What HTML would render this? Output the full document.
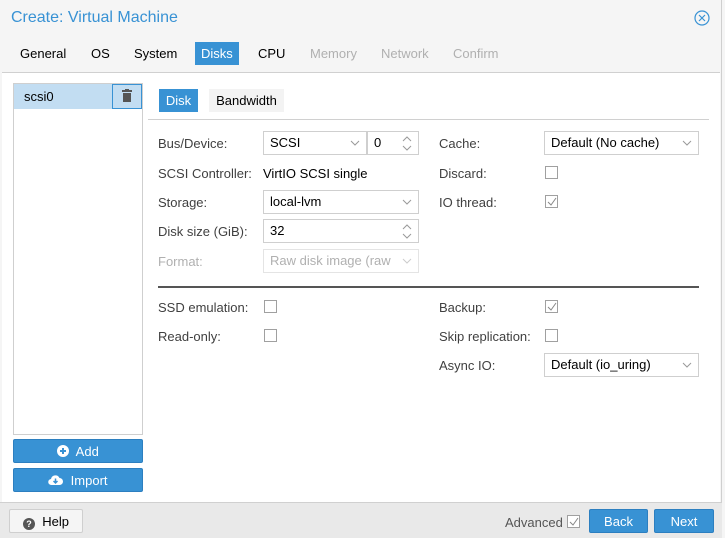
<!DOCTYPE html>
<html><head><style>
*{box-sizing:border-box;margin:0;padding:0}
body{width:725px;height:538px;overflow:hidden;background:#f5f5f5;font-family:"Liberation Sans",sans-serif;font-size:13px;color:#000;position:relative}
.a{position:absolute}
.win{left:0;top:0;width:722px;height:538px;background:#f5f5f5;border-right:1px solid #cfcfcf}
.title{left:11px;top:9px;font-size:16px;color:#3892d4}
.tab{top:42px;height:23px;line-height:23px;padding:0 6px;font-size:13px}
.body{left:2px;top:72px;width:718px;height:430px;background:#fff;border-top:1px solid #d0d0d0}
.lbl{color:#404040}
.dis{color:#b0b0b0}
.inp{height:24px;border:1px solid #cfcfcf;background:#fff;line-height:22px;padding-left:6px}
.chk{width:13px;height:13px;border:1px solid #a0a0a0;background:#fff}
.btn{background:#3892d4;color:#fff;border:1px solid #2c7fc0;border-radius:2px;text-align:center;line-height:24px}
.foot{left:0;top:502px;width:722px;height:36px;background:#e9e9e9;border-top:1px solid #d0d0d0}
.arr{position:absolute;right:6px;top:7px}
</style></head><body>
<div class="a win"></div>
<div class="a title">Create: Virtual Machine</div>
<svg class="a" style="left:694px;top:10px" width="16" height="16" viewBox="0 0 16 16"><circle cx="8" cy="8" r="7" fill="none" stroke="#3892d4" stroke-width="1.2"/><path d="M5 5L11 11M11 5L5 11" stroke="#3892d4" stroke-width="1.2"/></svg>
<div class="a tab" style="left:14px">General</div>
<div class="a tab" style="left:85px">OS</div>
<div class="a tab" style="left:128px">System</div>
<div class="a tab" style="left:195px;background:#3892d4;color:#fff">Disks</div>
<div class="a tab" style="left:252px">CPU</div>
<div class="a tab dis" style="left:304px">Memory</div>
<div class="a tab dis" style="left:375px">Network</div>
<div class="a tab dis" style="left:447px">Confirm</div>
<div class="a body"></div>
<div class="a" style="left:13px;top:83px;width:130px;height:352px;border:1px solid #cfcfcf"></div>
<div class="a" style="left:14px;top:84px;width:128px;height:25px;background:#c2ddf2;line-height:25px;padding-left:10px">scsi0</div>
<div class="a" style="left:112px;top:84px;width:30px;height:25px;border:1px solid #3892d4;background:#c2ddf2"></div>
<svg class="a" style="left:121px;top:89px" width="12" height="13" viewBox="0 0 12 13"><rect x="1" y="1" width="10" height="2" fill="#555"/><rect x="4" y="0" width="4" height="2" fill="#555"/><rect x="2" y="4" width="8" height="9" fill="#555"/></svg>
<div class="a btn" style="left:13px;top:439px;width:130px;height:24px"><svg width="12" height="12" viewBox="0 0 12 12" style="vertical-align:-1px"><circle cx="6" cy="6" r="6" fill="#fff"/><path d="M6 3V9M3 6H9" stroke="#3892d4" stroke-width="2"/></svg>&nbsp; Add</div>
<div class="a btn" style="left:13px;top:468px;width:130px;height:24px"><svg width="15" height="12" viewBox="0 0 15 12" style="vertical-align:-1px"><path d="M3.5 11A3 3 0 0 1 3 5A4.5 4.5 0 0 1 11.5 4A3.5 3.5 0 0 1 11.5 11Z" fill="#fff"/><path d="M7.5 4.5V9M5.5 7L7.5 9L9.5 7" stroke="#3892d4" stroke-width="1.5" fill="none"/></svg>&nbsp; Import</div>
<div class="a" style="left:159px;top:89px;width:39px;height:23px;background:#3892d4;color:#fff;line-height:23px;text-align:center">Disk</div>
<div class="a" style="left:209px;top:89px;width:75px;height:23px;background:#f3f3f3;line-height:23px;text-align:center">Bandwidth</div>
<div class="a" style="left:148px;top:119px;width:561px;height:1px;background:#d0d0d0"></div>
<div class="a lbl" style="left:158px;top:136px">Bus/Device:</div>
<div class="a inp" style="left:263px;top:131px;width:104px">SCSI<svg class="arr" width="10" height="8" viewBox="0 0 10 8"><path d="M1 2L5 6L9 2" stroke="#999" fill="none"/></svg></div>
<div class="a inp" style="left:367px;top:131px;width:52px">0<svg class="arr" style="top:4px" width="10" height="15" viewBox="0 0 10 15"><path d="M1 5L5 1L9 5M1 10L5 14L9 10" stroke="#999" fill="none"/></svg></div>
<div class="a lbl" style="left:158px;top:166px">SCSI Controller:</div>
<div class="a" style="left:263px;top:166px">VirtIO SCSI single</div>
<div class="a lbl" style="left:158px;top:195px">Storage:</div>
<div class="a inp" style="left:263px;top:190px;width:156px">local-lvm<svg class="arr" width="10" height="8" viewBox="0 0 10 8"><path d="M1 2L5 6L9 2" stroke="#999" fill="none"/></svg></div>
<div class="a lbl" style="left:158px;top:224px">Disk size (GiB):</div>
<div class="a inp" style="left:263px;top:219px;width:156px">32<svg class="arr" style="top:4px" width="10" height="15" viewBox="0 0 10 15"><path d="M1 5L5 1L9 5M1 10L5 14L9 10" stroke="#999" fill="none"/></svg></div>
<div class="a dis" style="left:158px;top:254px">Format:</div>
<div class="a inp dis" style="left:263px;top:249px;width:156px;border-color:#e4e4e4">Raw disk image (raw<svg class="arr" width="10" height="8" viewBox="0 0 10 8"><path d="M1 2L5 6L9 2" stroke="#ccc" fill="none"/></svg></div>
<div class="a lbl" style="left:439px;top:136px">Cache:</div>
<div class="a inp" style="left:544px;top:131px;width:155px">Default (No cache)<svg class="arr" width="10" height="8" viewBox="0 0 10 8"><path d="M1 2L5 6L9 2" stroke="#999" fill="none"/></svg></div>
<div class="a lbl" style="left:439px;top:166px">Discard:</div>
<div class="a chk" style="left:545px;top:166px"></div>
<div class="a lbl" style="left:439px;top:195px">IO thread:</div>
<div class="a chk" style="left:545px;top:195px"><svg class="a" style="left:1px;top:1px" width="10" height="10" viewBox="0 0 10 10"><path d="M1 5L4 8L9 1" stroke="#888" fill="none"/></svg></div>
<div class="a" style="left:158px;top:286px;width:541px;height:2px;background:#555"></div>
<div class="a lbl" style="left:158px;top:300px">SSD emulation:</div>
<div class="a chk" style="left:264px;top:300px"></div>
<div class="a lbl" style="left:158px;top:329px">Read-only:</div>
<div class="a chk" style="left:264px;top:329px"></div>
<div class="a lbl" style="left:439px;top:300px">Backup:</div>
<div class="a chk" style="left:545px;top:300px"><svg class="a" style="left:1px;top:1px" width="10" height="10" viewBox="0 0 10 10"><path d="M1 5L4 8L9 1" stroke="#888" fill="none"/></svg></div>
<div class="a lbl" style="left:439px;top:329px">Skip replication:</div>
<div class="a chk" style="left:545px;top:329px"></div>
<div class="a lbl" style="left:439px;top:358px">Async IO:</div>
<div class="a inp" style="left:544px;top:353px;width:155px">Default (io_uring)<svg class="arr" width="10" height="8" viewBox="0 0 10 8"><path d="M1 2L5 6L9 2" stroke="#999" fill="none"/></svg></div>
<div class="a foot"></div>
<div class="a" style="left:9px;top:509px;width:74px;height:24px;background:#f5f5f5;border:1px solid #cfcfcf;border-radius:2px;line-height:23px;padding-left:13px"><span style="display:inline-block;width:12px;height:12px;border-radius:6px;background:#555;color:#fff;font-size:9px;line-height:12px;text-align:center;font-weight:bold;vertical-align:-1px">?</span>&nbsp; Help</div>
<div class="a" style="left:505px;top:515px;color:#555">Advanced</div>
<div class="a chk" style="left:567px;top:515px"><svg class="a" style="left:1px;top:1px" width="10" height="10" viewBox="0 0 10 10"><path d="M1 5L4 8L9 1" stroke="#888" fill="none"/></svg></div>
<div class="a btn" style="left:589px;top:509px;width:59px;height:24px">Back</div>
<div class="a btn" style="left:654px;top:509px;width:60px;height:24px">Next</div>
</body></html>
